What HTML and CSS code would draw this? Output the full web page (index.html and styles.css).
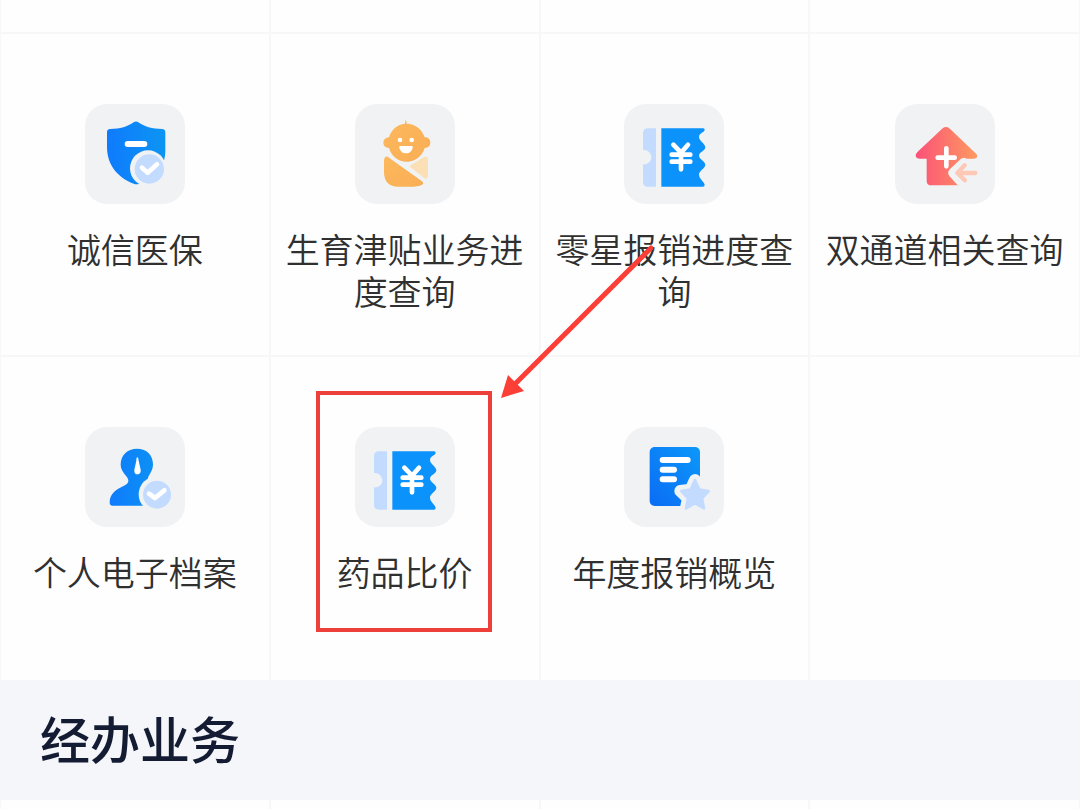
FILE: index.html
```html
<!DOCTYPE html>
<html lang="zh-CN">
<head>
<meta charset="utf-8">
<meta name="viewport" content="width=device-width, initial-scale=1">
<title>医保服务</title>
<link rel="stylesheet" href="styles.css">
</head>
<body>
<svg class="defs" aria-hidden="true">
  <defs>
    <linearGradient id="blue" x1="0" y1="0" x2="1" y2="0"><stop offset="0" stop-color="#0f7bfd"/><stop offset="1" stop-color="#0c95f2"/></linearGradient>
    <linearGradient id="doc" x1="0" y1="1" x2="1" y2="0"><stop offset="0" stop-color="#0b6cf4"/><stop offset="1" stop-color="#0c98fa"/></linearGradient>
    <linearGradient id="coral" x1="0" y1="0" x2="1" y2="0"><stop offset="0" stop-color="#fc5178"/><stop offset="1" stop-color="#fd9a60"/></linearGradient>
    <linearGradient id="amber" x1="0" y1="0" x2="1" y2="1"><stop offset="0" stop-color="#fdb85c"/><stop offset="1" stop-color="#f9ae55"/></linearGradient>
    <symbol id="ticket" viewBox="30 26 300 300">
      <path fill="#c3dbff" d="M102 99H126V274H102Q87 274 87 259V207C99 209 112 200 112 186S99 162 87 164V114Q87 99 102 99Z"/>
      <path fill="#0c92fb" d="M142 99H268Q272 99 272 104C270 112 255 113 255 125C255 137 274 145 274 156C274 166 255 171 255 181C255 191 274 198 274 208C274 219 255 226 255 237C255 251 270 259 272 268Q272 274 267 274H142Z"/>
      <path class="line yen" d="M178 148L201 172L222 148M173 178H229M173 199H229M201 174V222"/>
    </symbol>
  </defs>
</svg>
<main>
  <nav class="grid" aria-label="查询服务">
    <span class="cell stub"></span><span class="cell stub"></span><span class="cell stub"></span><span class="cell stub"></span>
    <a class="cell" href="#">
      <svg class="icon" viewBox="30 26 300 300" aria-hidden="true">
        <path fill="url(#blue)" d="M176 81Q183 76 190 81C208 94 231 101 262 101Q271 102 271 111V166C271 216 238 253 191 266Q184 268 176 265C126 246 96 207 96 155V110Q96 102 105 101C136 101 158 94 176 81Z"/>
        <path class="line" stroke-width="18" d="M158 146H208"/>
        <circle cx="219" cy="219" r="54" fill="#f0f2f4"/><circle cx="223" cy="221" r="44" fill="#c3dbff"/>
        <path class="line check" d="M201 217L218 232L246 207"/>
      </svg>
      <span class="label">诚信医保</span>
    </a>
    <a class="cell" href="#">
      <svg class="icon" viewBox="30 26 300 300" aria-hidden="true">
        <path fill="url(#amber)" d="M181 74Q186 77 185 85C210 86 231 101 239 126C250 126 256 132 256 142S250 157 239 158C231 183 211 199 185 199S140 183 132 158C121 157 115 151 115 142S121 127 132 126C139 102 158 87 180 85Z"/>
        <circle cx="165" cy="134" r="7" fill="#fff"/><circle cx="200" cy="134" r="7" fill="#fff"/>
        <path fill="#fff" d="M165 152H201Q204 152 203 157C200 169 193 174 183 174S166 169 163 157Q162 152 165 152Z"/>
        <path fill="url(#amber)" d="M122 184Q126 182 132 187L230 257Q237 261 234 266Q228 273 206 274H160Q119 274 117 233V196Q117 187 122 184Z"/>
        <path fill="#fbdfb5" d="M193 213L236 186Q249 180 249 192V235Q248 256 238 248Z"/>
      </svg>
      <span class="label">生育津贴业务进度查询</span>
    </a>
    <a class="cell" href="#">
      <svg class="icon" aria-hidden="true"><use href="#ticket"/></svg>
      <span class="label">零星报销进度查询</span>
    </a>
    <a class="cell" href="#">
      <svg class="icon" viewBox="30 26 300 300" aria-hidden="true">
        <path fill="url(#coral)" d="M173 99Q183 91 193 99L271 173Q280 181 275 187Q272 190 264 190H243V270H139Q125 270 125 256V190H105Q93 190 92 181Q92 175 98 169Z"/>
        <path class="line" stroke-width="14" d="M158 187H209M184 159V213"/>
        <path fill="#f0f2f4" d="M228 190Q241 183 246 193L244 272H220L193 242Q185 231 195 221Z"/>
        <path class="back" d="M239 210L217 233L240 255M221 233H271"/>
      </svg>
      <span class="label">双通道相关查询</span>
    </a>
    <a class="cell" href="#">
      <svg class="icon" viewBox="30 30 300 300" aria-hidden="true">
        <path fill="url(#blue)" d="M186 95C216 95 234 115 234 142C234 165 218 175 218 189C218 209 262 216 262 257Q262 266 252 266H111Q104 266 104 256C105 228 125 217 144 208C157 202 160 198 160 190C160 178 137 166 137 143C137 115 157 95 186 95Z"/>
        <path fill="#fff" d="M187 121Q190 121 191 131L197 158C198 168 193 172 187 172S177 168 178 158L184 131Q184 121 187 121Z"/>
        <circle cx="245" cy="232" r="54" fill="#f0f2f4"/><circle cx="246" cy="233" r="42" fill="#c3dbff"/>
        <path class="line check" d="M222 230L240 243L268 220"/>
      </svg>
      <span class="label">个人电子档案</span>
    </a>
    <a class="cell marked" href="#">
      <svg class="icon" aria-hidden="true"><use href="#ticket"/></svg>
      <span class="label">药品比价</span>
      <span class="frame"></span>
      <svg class="arrow" viewBox="0 0 160 160" aria-hidden="true">
        <path stroke="#fb3e36" stroke-width="5" stroke-linecap="round" d="M150 8L14 144"/>
        <path fill="#fb3e36" d="M0 158L7 135L23 151Z"/>
      </svg>
    </a>
    <a class="cell" href="#">
      <svg class="icon" viewBox="30 30 300 300" aria-hidden="true">
        <rect x="107" y="90" width="151" height="177" rx="15" fill="url(#doc)"/>
        <path class="line" stroke-width="18" d="M146 129H221M146 158H180M146 187H180"/>
        <path fill="#f0f2f4" stroke="#f0f2f4" stroke-width="36" stroke-linejoin="round" d="M243 189L256 218L286 222L264 244L270 273L243 259L216 273L222 244L199 222L230 218Z"/>
        <path fill="#c3dbff" stroke="#c3dbff" stroke-width="8" stroke-linejoin="round" d="M243 189L256 218L284 222L264 244L270 274L243 259L216 274L222 244L202 222L230 218Z"/>
      </svg>
      <span class="label">年度报销概览</span>
    </a>
  </nav>
  <section>
    <h2 class="title">经办业务</h2>
    <div class="grid next"><span class="cell stub"></span><span class="cell stub"></span><span class="cell stub"></span><span class="cell stub"></span></div>
  </section>
</main>
</body>
</html>
```
FILE: styles.css
```css
* { box-sizing: border-box; }

body {
  margin: 0;
  background: #fefefe;
  color: #303030;
  font-family: "Noto Sans CJK SC", sans-serif;
  overflow-x: hidden;
}

.defs { position: absolute; width: 0; height: 0; }

.grid {
  display: grid;
  grid-template-columns: repeat(4, 1fr);
  border-left: 1px solid #f7f7f8;
}

.cell {
  display: flex;
  flex-direction: column;
  align-items: center;
  gap: 24px;
  min-height: 323px;
  padding: 70px 8px 40px;
  border-right: 2px solid #f7f7f7;
  border-bottom: 2px solid #f7f7f7;
  color: inherit;
  text-decoration: none;
}

.cell:nth-child(4n) { border-right-width: 1px; }
.cell:nth-child(n + 9) { border-bottom: 0; }

.stub { min-height: 34px; padding: 0; }
.next .stub { min-height: 9px; border-bottom: 0; }

.icon {
  flex: none;
  width: 100px;
  height: 100px;
  border-radius: 22px;
  background: #f0f2f4;
}

.line {
  fill: none;
  stroke: #fff;
  stroke-linecap: round;
  stroke-linejoin: round;
}
.check, .yen { stroke-width: 14px; }

.back {
  fill: none;
  stroke: #fdc9b6;
  stroke-width: 13px;
  stroke-linecap: round;
  stroke-linejoin: round;
}

.label {
  font-size: 34px;
  font-weight: 350;
  line-height: 42px;
  text-align: center;
}

.marked { position: relative; }

.frame {
  position: absolute;
  top: 34px;
  left: 45px;
  width: 176px;
  height: 241px;
  border: 4px solid #ee403a;
}

.arrow {
  position: absolute;
  z-index: 1;
  top: -117px;
  left: 230px;
  width: 160px;
  height: 160px;
}

.title {
  margin: 0;
  padding: 21px 40px 27px;
  background: #f5f6fa;
  color: #131c33;
  font-size: 50px;
  font-weight: 500;
  line-height: 72px;
}
```
